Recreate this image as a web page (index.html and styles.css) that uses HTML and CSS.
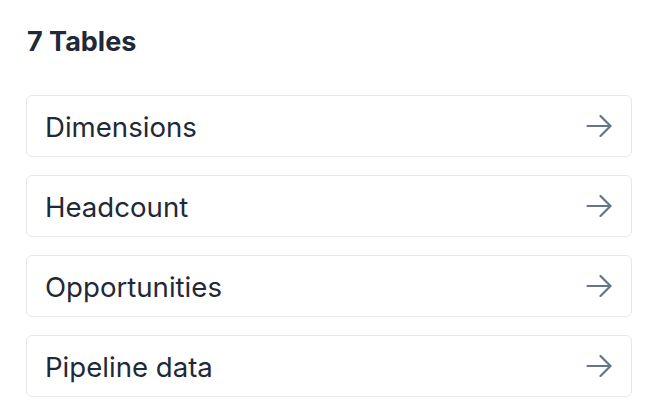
FILE: index.html
```html
<!DOCTYPE html>
<html>
<head>
<meta charset="utf-8">
<link rel="stylesheet" href="styles.css">
</head>
<body>
<div class="panel">
  <h2 class="title">7 Tables</h2>
  <ul class="list">
    <li class="card"><span class="name">Dimensions</span><svg class="arrow" viewBox="0 0 26 22"><path d="M1.5 11h23M14.5 1l10 10-10 10"/></svg></li>
    <li class="card"><span class="name">Headcount</span><svg class="arrow" viewBox="0 0 26 22"><path d="M1.5 11h23M14.5 1l10 10-10 10"/></svg></li>
    <li class="card"><span class="name">Opportunities</span><svg class="arrow" viewBox="0 0 26 22"><path d="M1.5 11h23M14.5 1l10 10-10 10"/></svg></li>
    <li class="card"><span class="name">Pipeline data</span><svg class="arrow" viewBox="0 0 26 22"><path d="M1.5 11h23M14.5 1l10 10-10 10"/></svg></li>
  </ul>
</div>
</body>
</html>
```
FILE: styles.css
```css
html, body {
  margin: 0;
  padding: 0;
  background: #ffffff;
}
body {
  font-family: Inter, "Noto Sans", sans-serif;
  color: #1f2937;
}
.panel {
  padding: 24px 26px 0 26px;
  width: 606px;
}
.title {
  margin: 0 0 0 1px;
  font-size: 27px;
  font-weight: 700;
  line-height: 36px;
  color: #1f2937;
}
.list {
  list-style: none;
  margin: 35px 0 0 0;
  padding: 0;
  display: flex;
  flex-direction: column;
  gap: 18px;
}
.card {
  box-sizing: border-box;
  height: 62px;
  border: 1.5px solid #e5e7eb;
  border-radius: 6px;
  display: flex;
  align-items: center;
  justify-content: space-between;
  padding: 0 19px 0 18px;
}
.name {
  font-size: 27.6px;
  line-height: 36px;
  color: #1f2937;
  padding-top: 1px;
}
.arrow {
  width: 26px;
  height: 22px;
  fill: none;
  stroke: #64748b;
  stroke-width: 2.2;
  stroke-linecap: round;
  stroke-linejoin: round;
}
```
